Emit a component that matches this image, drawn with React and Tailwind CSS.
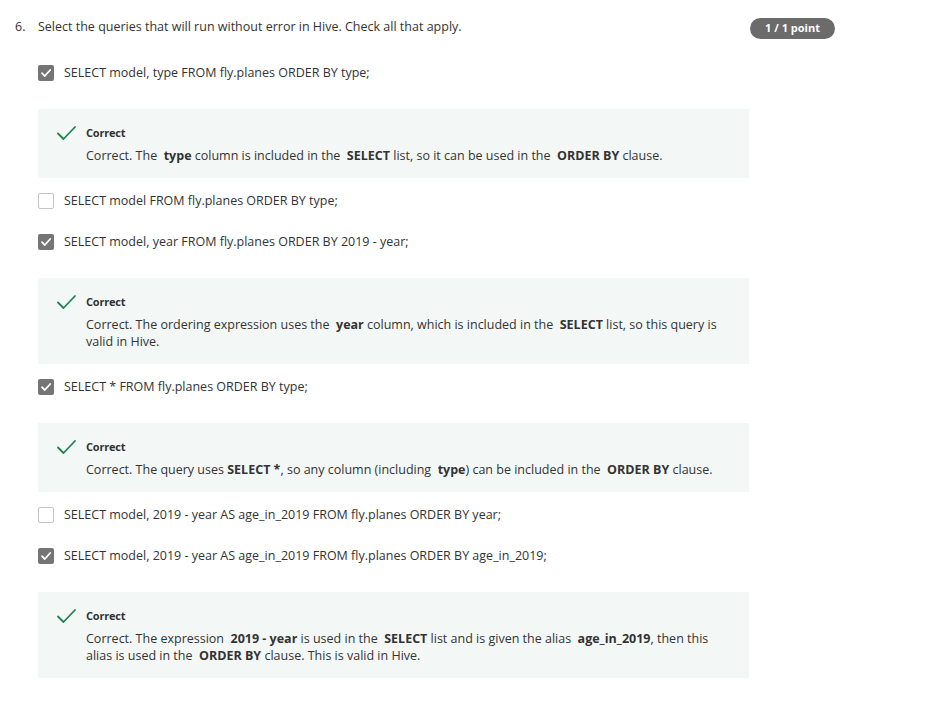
const S = '\u00a0'

const options = [
  {
    checked: true,
    text: 'SELECT model, type FROM fly.planes ORDER BY type;',
    feedback: (
      <>
        Correct. The{S} <b className="font-bold">type</b> column is included in the{S} <b className="font-bold">SELECT</b> list, so it can be used in the{S} <b className="font-bold">ORDER BY</b> clause.
      </>
    ),
  },
  { checked: false, text: 'SELECT model FROM fly.planes ORDER BY type;' },
  {
    checked: true,
    text: 'SELECT model, year FROM fly.planes ORDER BY 2019 - year;',
    feedback: (
      <>
        Correct. The ordering expression uses the{S} <b className="font-bold">year</b> column, which is included in the{S} <b className="font-bold">SELECT</b> list, so this query is valid in Hive.
      </>
    ),
  },
  {
    checked: true,
    text: 'SELECT * FROM fly.planes ORDER BY type;',
    feedback: (
      <>
        Correct. The query uses <b className="font-bold">SELECT *</b>, so any column (including{S} <b className="font-bold">type</b>) can be included in the{S} <b className="font-bold">ORDER BY</b> clause.
      </>
    ),
  },
  { checked: false, text: 'SELECT model, 2019 - year AS age_in_2019 FROM fly.planes ORDER BY year;' },
  {
    checked: true,
    text: 'SELECT model, 2019 - year AS age_in_2019 FROM fly.planes ORDER BY age_in_2019;',
    feedback: (
      <>
        Correct. The expression{S} <b className="font-bold">2019 - year</b> is used in the{S} <b className="font-bold">SELECT</b> list and is given the alias{S} <b className="font-bold">age_in_2019</b>, then this alias is used in the{S} <b className="font-bold">ORDER BY</b> clause. This is valid in Hive.
      </>
    ),
  },
]

function Checkbox({ checked }) {
  if (!checked) {
    return <div className="w-4 h-4 border border-[#c4c4c4] rounded-[2px] bg-white shrink-0" />
  }
  return (
    <div className="w-4 h-4 rounded-[2px] bg-[#757575] shrink-0 flex items-center justify-center">
      <svg width="12" height="12" viewBox="0 0 12 12" fill="none">
        <path d="M2 6.2 L4.8 9 L10.2 3" stroke="white" strokeWidth="1.8" strokeLinecap="round" strokeLinejoin="round" />
      </svg>
    </div>
  )
}

function Feedback({ children }) {
  return (
    <div className="mt-[26px] w-[711px] bg-[#f3f8f6] pl-[19px] pr-5 pt-4 pb-[14px] flex">
      <svg width="19" height="16" viewBox="0 0 19 16" fill="none" className="shrink-0">
        <path d="M1 8.5 L6.5 14 L18 2" stroke="#1f8354" strokeWidth="1.8" strokeLinecap="round" strokeLinejoin="round" />
      </svg>
      <div className="ml-[10px]">
        <div className="text-[11px] leading-4 font-bold text-[#333] tracking-[-0.2px]">Correct</div>
        <div className="mt-[6px] text-[12.5px] leading-[17px] text-[#333]">{children}</div>
      </div>
    </div>
  )
}

export default function App() {
  return (
    <div className="min-h-[707px] bg-white text-[#333] pt-[17px]" style={{ fontFamily: '"Open Sans", "Liberation Sans", sans-serif' }}>
      <div className="flex items-start w-[835px]">
        <div className="w-[38px] pl-[15px] text-[12.5px] leading-5">6.</div>
        <div className="flex-1 text-[12.5px] leading-5">Select the queries that will run without error in Hive. Check all that apply.</div>
        <div className="mt-[1px] h-[21px] w-[85px] rounded-full bg-[#6b6b6b] text-white text-[11px] font-bold flex items-center justify-center">1 / 1 point</div>
      </div>
      <div className="pl-[38px] mt-6">
        {options.map((o, i) => {
          const prev = options[i - 1]
          const mt = i === 0 ? 'mt-0' : prev.feedback ? 'mt-[13px]' : 'mt-[21px]'
          return (
            <div key={i} className={mt}>
              <div className="flex items-center h-5">
                <Checkbox checked={o.checked} />
                <span className="ml-[10px] text-[12.5px] leading-5">{o.text}</span>
              </div>
              {o.feedback && <Feedback>{o.feedback}</Feedback>}
            </div>
          )
        })}
      </div>
    </div>
  )
}
